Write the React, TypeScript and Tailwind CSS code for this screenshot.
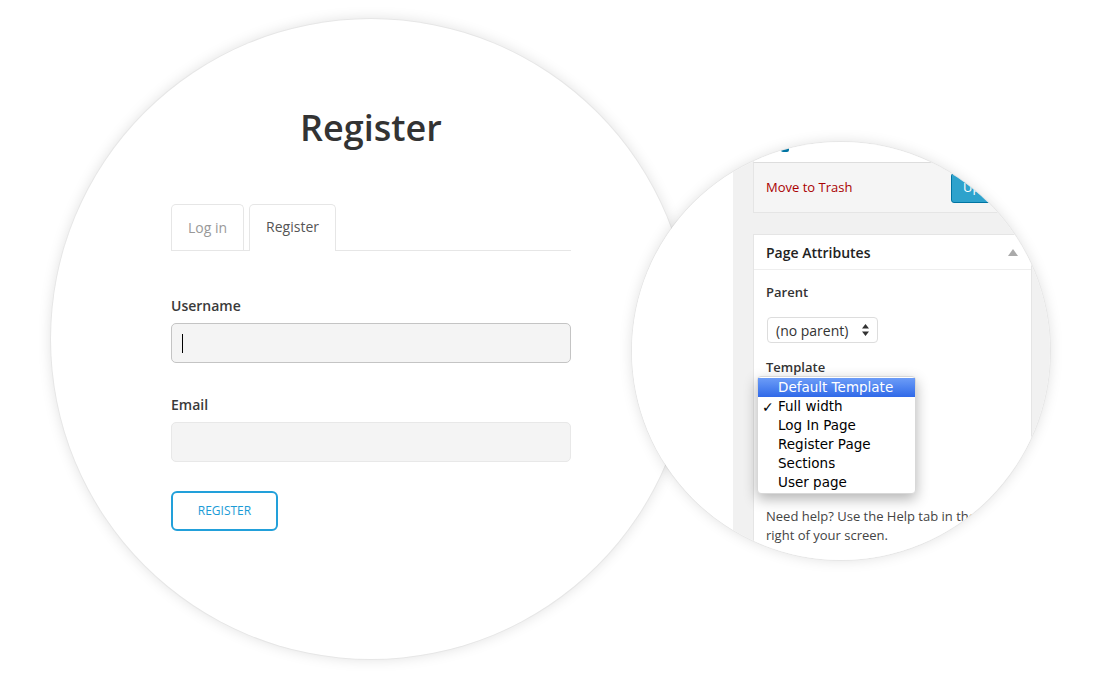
const templates = ['Default Template', 'Full width', 'Log In Page', 'Register Page', 'Sections', 'User page'];

const RegisterCircle = () => {
    return (
        <div className="absolute left-[51px] top-[19px] w-[640px] h-[640px] rounded-full bg-white shadow-[0_0_0_1px_rgba(0,0,0,0.04),0_0_14px_rgba(0,0,0,0.13)]">
            <div className="w-[400px] ml-[120px] pt-[87px] flex flex-col" style={{ fontFamily: '"Open Sans", sans-serif' }}>
                <h1 className="text-[36px] leading-[44px] font-semibold text-[#333] text-center">Register</h1>

                <div className="mt-[54px] flex gap-[5px] border-b border-[#e6e6e6]">
                    <div className="h-[46px] pb-[1px] px-[16px] flex items-center border border-b-0 border-[#e6e6e6] rounded-t-[5px] text-[14px] text-[#999]">
                        Log in
                    </div>
                    <div className="h-[47px] -mb-px pb-[3px] px-[16px] flex items-center border border-b-0 border-[#e6e6e6] rounded-t-[5px] bg-white text-[14px] text-[#555]">
                        Register
                    </div>
                </div>

                <label className="mt-[45px] text-[14px] leading-[20px] font-semibold text-[#3a3a3a]">Username</label>
                <div className="mt-[7px] h-[40px] rounded-[5px] bg-[#f4f4f4] border border-[#c4c4c4] flex items-center pl-[10px]">
                    <div className="w-px h-[19px] bg-black"></div>
                </div>

                <label className="mt-[32px] text-[14px] leading-[20px] font-semibold text-[#3a3a3a]">Email</label>
                <div className="mt-[7px] h-[40px] rounded-[5px] bg-[#f4f4f4] border border-[#e8e8e8]"></div>

                <div className="mt-[29px] w-[107px] h-[40px] rounded-[6px] border-2 border-[#22a0da] flex items-center justify-center text-[12px] text-[#1b9bd6]">
                    REGISTER
                </div>
            </div>
        </div>
    );
};

const AdminCircle = () => {
    return (
        <div className="absolute left-[632px] top-[142px] w-[418px] h-[418px] rounded-full overflow-hidden bg-white shadow-[0_0_0_1px_rgba(0,0,0,0.04),0_0_14px_rgba(0,0,0,0.13)]"
            style={{ fontFamily: '"Open Sans", sans-serif' }}
        >
            <div className="h-full flex">
                <div className="w-[101px] bg-white"></div>
                <div className="flex-1 bg-[#f1f1f1] pl-[20px]">
                    <div className="w-[279px] flex flex-col">
                        {/* publish box, only its bottom is inside the circle */}
                        <div className="h-[20px] bg-white border-x border-[#e5e5e5] relative">
                            <div className="absolute left-[27px] top-[5px] w-[8px] h-[5px] bg-[#0074a2] rounded-b-[2px]"></div>
                        </div>
                        <div className="h-[51px] bg-[#f5f5f5] border border-t-[#dddddd] border-[#e5e5e5] px-[12px] flex items-center justify-between">
                            <span className="text-[13px] text-[#aa0000]">Move to Trash</span>
                            <div className="w-[68px] h-[30px] rounded-[3px] bg-[#2ea2cc] border border-[#0074a2] shadow-[inset_0_1px_0_rgba(120,200,230,0.5)] flex items-center pl-[11px] text-[13px] text-white">
                                Update
                            </div>
                        </div>

                        <div className="mt-[21px] bg-white border border-[#e5e5e5]">
                            <div className="h-[35px] border-b border-[#eeeeee] px-[12px] flex items-center justify-between">
                                <span className="text-[14px] font-semibold text-[#222]">Page Attributes</span>
                                <svg width="10" height="7" viewBox="0 0 10 7" className="mr-[1px]">
                                    <path d="M5 0 L10 7 L0 7 Z" fill="#aaaaaa" />
                                </svg>
                            </div>
                            <div className="px-[12px] pt-[13px] flex flex-col">
                                <span className="text-[13px] leading-[18px] font-semibold text-[#333]">Parent</span>
                                <div className="mt-[16px] ml-px w-[111px] h-[26px] rounded-[4px] border border-[#dddddd] bg-white flex items-center justify-between pl-[8px] pr-[8px] text-[14px] text-[#333]">
                                    <span>(no parent)</span>
                                    <svg width="7" height="12" viewBox="0 0 7 12">
                                        <path d="M3.5 0 L7 4.5 L0 4.5 Z M3.5 12 L7 7.5 L0 7.5 Z" fill="#333" />
                                    </svg>
                                </div>
                                <span className="mt-[15px] text-[13px] leading-[18px] font-semibold text-[#333]">Template</span>
                                <div className="mt-[16px] w-[150px] h-[26px] rounded-[4px] border border-[#eeeeee] bg-white"></div>
                                <div className="mt-[15px] h-[18px]"></div>
                                <div className="mt-[16px] w-[60px] h-[26px] border border-[#eeeeee] bg-white"></div>
                                <p className="mt-[14px] pb-[20px] text-[13px] leading-[19px] text-[#444] whitespace-nowrap">
                                    Need help? Use the Help tab in the upper<br />right of your screen.
                                </p>
                            </div>
                        </div>
                    </div>
                </div>
            </div>

            {/* native template menu */}
            <div className="absolute left-[125px] top-[234px] w-[159px] py-px rounded-[4px] bg-white border border-[#d8d8d8] shadow-[0_5px_14px_rgba(0,0,0,0.3)]"
                style={{ fontFamily: '"DejaVu Sans", sans-serif' }}
            >
                {templates.map((t, i) => (
                    <div key={t}
                        className={
                            i === 0
                                ? 'h-[19px] flex items-center pl-[20px] text-[13.5px] text-white bg-linear-to-b from-[#6c9cf7] to-[#3069e8]'
                                : 'h-[19px] flex items-center pl-[20px] text-[13.5px] text-black relative'
                        }
                    >
                        {i === 1 && <span className="absolute left-[4px] top-0 text-[14px] font-bold">✓</span>}
                        {t}
                    </div>
                ))}
            </div>
        </div>
    );
};

export default function App() {
    return (
        <div className="relative w-[1100px] h-[680px] bg-white overflow-hidden">
            <RegisterCircle />
            <AdminCircle />
        </div>
    );
}
